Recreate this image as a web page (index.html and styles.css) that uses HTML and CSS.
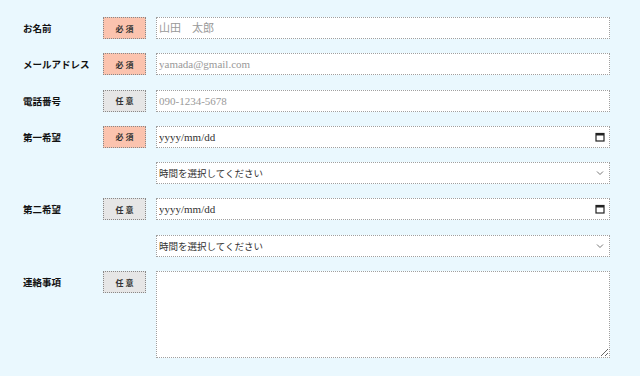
FILE: index.html
```html
<!DOCTYPE html>
<html lang="ja">
<head>
    <meta charset="utf-8">
    <title>予約フォーム</title>
    <link rel="stylesheet" href="styles.css">
</head>
<body>
    <form class="form">
        <div class="row">
            <label class="label">お名前</label>
            <span class="badge required">必 須</span>
            <input type="text" class="field" placeholder="山田　太郎">
        </div>
        <div class="row">
            <label class="label">メールアドレス</label>
            <span class="badge required">必 須</span>
            <input type="email" class="field" placeholder="yamada@gmail.com">
        </div>
        <div class="row">
            <label class="label">電話番号</label>
            <span class="badge">任 意</span>
            <input type="tel" class="field" placeholder="090-1234-5678">
        </div>
        <div class="row">
            <label class="label">第一希望</label>
            <span class="badge required">必 須</span>
            <div class="wrap">
                <input type="text" class="field" value="yyyy/mm/dd">
                <svg class="icon" width="10" height="10" viewBox="0 0 10 10"><rect x="1" y="1.5" width="8" height="7.5" fill="none" stroke="#222" stroke-width="1.2"/><rect x="1" y="1.5" width="8" height="2" fill="#222"/></svg>
            </div>
        </div>
        <div class="row">
            <div class="wrap">
                <select class="field select">
                    <option>時間を選択してください</option>
                </select>
                <svg class="icon" width="10" height="10" viewBox="0 0 10 10"><path d="M2 3.5 L5 6.5 L8 3.5" fill="none" stroke="#666" stroke-width="0.9"/></svg>
            </div>
        </div>
        <div class="row">
            <label class="label">第二希望</label>
            <span class="badge">任 意</span>
            <div class="wrap">
                <input type="text" class="field" value="yyyy/mm/dd">
                <svg class="icon" width="10" height="10" viewBox="0 0 10 10"><rect x="1" y="1.5" width="8" height="7.5" fill="none" stroke="#222" stroke-width="1.2"/><rect x="1" y="1.5" width="8" height="2" fill="#222"/></svg>
            </div>
        </div>
        <div class="row">
            <div class="wrap">
                <select class="field select">
                    <option>時間を選択してください</option>
                </select>
                <svg class="icon" width="10" height="10" viewBox="0 0 10 10"><path d="M2 3.5 L5 6.5 L8 3.5" fill="none" stroke="#666" stroke-width="0.9"/></svg>
            </div>
        </div>
        <div class="row top">
            <label class="label">連絡事項</label>
            <span class="badge">任 意</span>
            <textarea class="field area"></textarea>
        </div>
    </form>
</body>
</html>
```

FILE: styles.css
```css
body { margin: 0; background: #eaf8fe; font-family: "Noto Sans CJK JP", sans-serif; color: #222; }
.form { padding: 17px 30px 0 23px; display: flex; flex-direction: column; gap: 14.3px; }
.row { display: grid; grid-template-columns: 80px 53px 1fr; align-items: center; }
.row.top { align-items: start; }
.label { font-size: 9.5px; font-weight: bold; line-height: 22px; color: #111; }
.badge {
    width: 43px; height: 22px; box-sizing: border-box;
    display: flex; align-items: center; justify-content: center;
    background: #e6e6e6; border: 1px dotted #888;
    font-size: 8px; font-weight: bold; color: #333;
}
.badge.required { background: #fbc3ae; }
.wrap { grid-column: 3; position: relative; }
.wrap .field { width: 100%; display: block; }
.icon { position: absolute; right: 5px; top: 6px; pointer-events: none; }
.field {
    grid-column: 3; height: 22px; box-sizing: border-box; margin: 0;
    border: 1px dotted #a0a0a0; background: #fff; padding: 0 2px;
    font-family: "Liberation Serif", "Noto Sans CJK JP", serif; font-size: 11px; color: #333;
}
.field::placeholder { color: #999; }
.select {
    appearance: none; -webkit-appearance: none;
    font-family: "Noto Sans CJK JP", sans-serif; font-size: 9.5px; color: #333; border-radius: 0;
}
.area { height: 87px; resize: vertical; }
```
